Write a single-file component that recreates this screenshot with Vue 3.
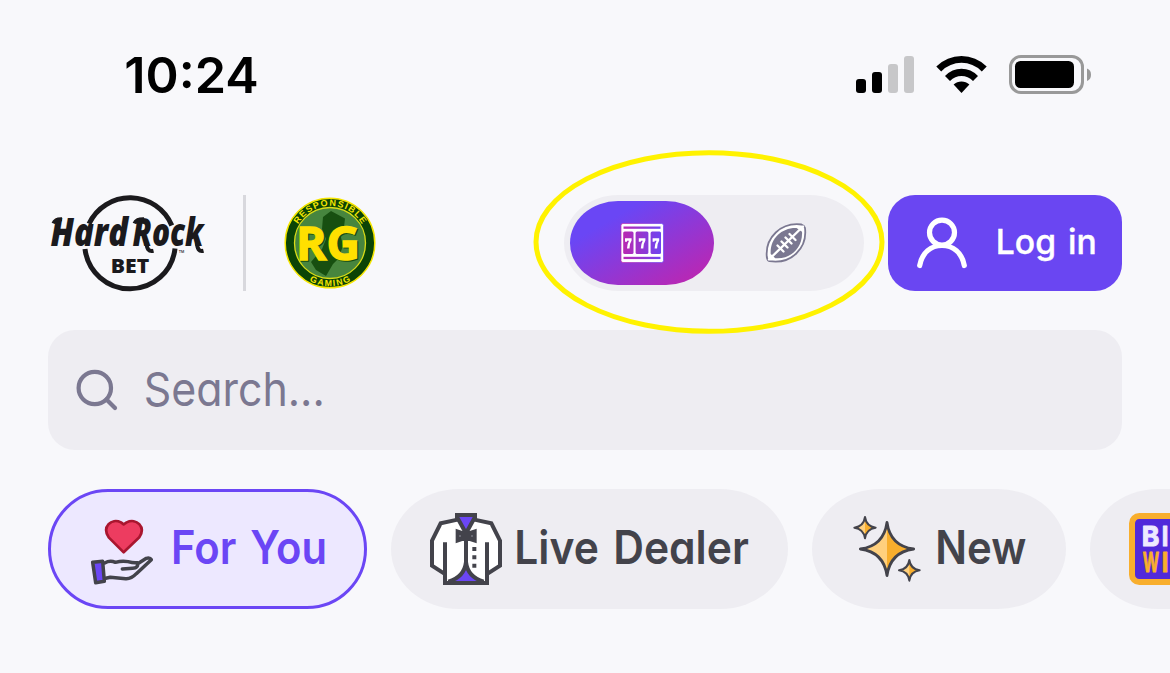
<script setup>
const star = (cx, cy, r) =>
  `M${cx} ${cy - r}Q${cx + r * 0.12} ${cy - r * 0.12} ${cx + r} ${cy}Q${cx + r * 0.12} ${cy + r * 0.12} ${cx} ${cy + r}Q${cx - r * 0.12} ${cy + r * 0.12} ${cx - r} ${cy}Q${cx - r * 0.12} ${cy - r * 0.12} ${cx} ${cy - r}Z`
const halfStar = (cx, cy, r) =>
  `M${cx} ${cy - r}Q${cx + r * 0.12} ${cy - r * 0.12} ${cx + r} ${cy}Q${cx + r * 0.12} ${cy + r * 0.12} ${cx} ${cy + r}Z`
const sparkles = [
  { cx: 246, cy: 207, r: 80, w: 8.5 },
  { cx: 180, cy: 143, r: 32, w: 6 },
  { cx: 313, cy: 271, r: 31, w: 6 },
]
</script>

<template>
  <div class="screen">
    <div class="status">
      <svg class="clock" width="140" height="50" viewBox="120 49 140 50">
        <text x="124.3" y="93" font-size="49.5" textLength="134.5" lengthAdjust="spacingAndGlyphs">10:24</text>
      </svg>
      <svg width="240" height="44" viewBox="854 52 240 44">
        <rect x="856" y="79" width="10" height="14" rx="3" />
        <rect x="872" y="72" width="10" height="21" rx="3" />
        <rect x="888" y="64" width="10" height="29" rx="3" fill="#c7c7c9" />
        <rect x="904" y="56" width="10" height="37" rx="3" fill="#c7c7c9" />
        <path d="M936.3 66.6Q947 56 961.5 56T986.7 66.6L981.8 71.4Q973 62.8 961.5 62.8T941.2 71.4Z" />
        <path d="M945 75.9Q952 68.7 961.5 68.7T978 75.9L973 81Q968 76 961.5 76T950 81Z" />
        <path d="M953.6 84.6Q957 81.4 961.5 81.4T969.4 84.6L961.5 93Z" />
        <rect x="1010.5" y="56.5" width="72" height="36" rx="10.5" fill="none" stroke="#999" stroke-width="3" />
        <rect x="1015" y="61" width="59" height="27" rx="5.5" />
        <path d="M1087 68.5Q1091 70 1091 74.8T1087 81Z" fill="#999" />
      </svg>
    </div>

    <header class="header">
      <svg width="160" height="96" viewBox="48 195 160 96">
        <path d="M89 223.800A45.300 45.300 0 0 1 171.800 225.500M175 248.500A45.300 45.300 0 0 1 85 249" fill="none" stroke="#1b1a1d" stroke-width="5" />
        <g class="brand">
          <text x="50.500" y="246" font-size="39.500" textLength="77.500" lengthAdjust="spacingAndGlyphs">Hard</text>
          <text x="132.500" y="246" font-size="39.500" textLength="71" lengthAdjust="spacingAndGlyphs">Rock</text>
        </g>
        <g fill="none" stroke="#1b1a1d" stroke-width="4">
          <path d="M53.500 223.500Q55 219 62 219.300M134.500 223.500Q136.500 219 144 219.300" />
          <path d="M146.500 242Q146.500 252.500 153.500 250.800M197 242Q197 252.500 203.500 250.800" />
        </g>
        <text class="bet" x="110.800" y="273" font-size="19.5" textLength="38.500" lengthAdjust="spacingAndGlyphs">BET</text>
        <text class="tm" x="178.800" y="252.500" font-size="4" textLength="5.500" lengthAdjust="spacingAndGlyphs">TM</text>
      </svg>
      <span class="rule"></span>
      <svg class="rg" width="92" height="96" viewBox="284 195 92 96">
        <defs>
          <path id="arc-top" d="M292.900 243A37.100 37.100 0 0 1 367.100 243" />
          <path id="arc-bottom" d="M286.800 243A43.200 43.200 0 0 0 373.200 243" />
        </defs>
        <circle cx="330" cy="243" r="44.800" fill="#0b4406" stroke="#f6e600" stroke-width="1.500" />
        <circle cx="330" cy="243" r="35.500" fill="#47853e" stroke="#d9dc18" stroke-width="1.300" />
        <path d="M323 217L331 211L345 218.500L344 227L340 233L343 246L338 259L333 264L326 276L316 270L311 262L322 249L326 239L322 229Z" fill="#174f10" />
        <text class="arc" font-size="9"><textPath href="#arc-top" startOffset="50%" text-anchor="middle" textLength="77">RESPONSIBLE</textPath></text>
        <text class="arc" font-size="8.800"><textPath href="#arc-bottom" startOffset="50%" text-anchor="middle" textLength="43">GAMING</textPath></text>
        <text class="rg-shadow" x="297.300" y="261.300" font-size="46.500" textLength="64" lengthAdjust="spacingAndGlyphs">RG</text>
        <text class="rg-text" x="296" y="260" font-size="46.500" textLength="64" lengthAdjust="spacingAndGlyphs">RG</text>
      </svg>

      <div class="toggle">
        <div class="side active">
          <svg width="44" height="40" viewBox="620 223 44 40">
            <defs>
              <linearGradient id="slot" x1="621" x2="663" y1="0" y2="0" gradientUnits="userSpaceOnUse">
                <stop stop-color="#bd27ad" /><stop offset="1" stop-color="#6a46f5" />
              </linearGradient>
            </defs>
            <rect x="621" y="223.500" width="42.500" height="39" rx="2" fill="#fff" stroke="url(#slot)" stroke-width=".7" />
            <g fill="url(#slot)">
              <rect x="623.500" y="226.500" width="37" height="2.300" />
              <rect x="623.500" y="256.800" width="37" height="2.300" />
              <rect x="623.200" y="231.600" width="10.300" height="22.500" rx="1.500" />
              <rect x="635.600" y="231.600" width="12.800" height="22.500" rx="1.500" />
              <rect x="650.600" y="231.600" width="10.400" height="22.500" rx="1.500" />
            </g>
            <g fill="#fff">
              <path d="M625 238.300H631.600V240.600Q629.600 243.500 629.500 248.500H627Q627 244 629 240.700H627V241.800H625Z" />
              <path d="M638.800 238.300H645.400V240.600Q643.400 243.500 643.300 248.500H640.800Q640.800 244 642.800 240.700H640.800V241.800H638.800Z" />
              <path d="M652.600 238.300H659.200V240.600Q657.200 243.500 657.100 248.500H654.600Q654.600 244 656.600 240.700H654.600V241.800H652.600Z" />
            </g>
          </svg>
        </div>
        <div class="side">
          <svg width="42" height="42" viewBox="765 222.500 42 42">
            <path d="M769.500 261.700Q767.300 261 766.800 257.500C765 238 781 222.500 801.500 225Q804.300 225.800 805 228.500C807.500 249 791 265 769.500 261.700Z" fill="#fff" stroke="#7b7891" stroke-width="1.800" />
            <path d="M770.700 254.500C769.500 240 781 228 796.500 228.500L802 232.300C803 248 791 260 775.300 258.700Z" fill="#7b7891" />
            <path d="M769 260L803 227M777.500 246L783.500 252M781.500 242L787.500 248M785.500 238L791.500 244M789.500 234.500L795.500 240.500" fill="none" stroke="#fff" stroke-width="2.300" stroke-linecap="round" />
          </svg>
        </div>
      </div>

      <button class="login">
        <svg width="200" height="60" viewBox="912 213 200 60">
          <g fill="none" stroke="#fff" stroke-width="5.200" stroke-linecap="round">
            <circle cx="942" cy="232.600" r="12.500" />
            <path d="M919.700 265.500C922 252.500 931 245.500 942 245.500S962 252.500 964.300 265.500" />
          </g>
          <text x="995.800" y="254.300" font-size="34.500" textLength="101" lengthAdjust="spacingAndGlyphs">Log in</text>
        </svg>
      </button>

      <svg class="highlight" width="352" height="184" viewBox="0 0 352 184">
        <ellipse cx="176" cy="92" rx="173" ry="89.300" />
      </svg>
    </header>

    <div class="search">
      <svg width="260" height="60" viewBox="72 360 260 60">
        <g fill="none" stroke="#7b7891" stroke-width="4.200" stroke-linecap="round">
          <circle cx="94.800" cy="388" r="16.200" />
          <path d="M106.500 399.500L115 408" />
        </g>
        <text x="143.800" y="406" font-size="46.500" textLength="181" lengthAdjust="spacingAndGlyphs">Search...</text>
      </svg>
    </div>

    <nav class="chips">
      <div class="chip selected">
        <svg width="64" height="72" viewBox="150 98 192 216">
          <path d="M251 216L206 171C185 139 214 112 243 126L251 132L260 126C289 112 319 139 298 171Z" fill="#ed3c60" stroke="#a9162f" stroke-width="8" stroke-linejoin="round" />
          <g fill="none" stroke="#43434b" stroke-width="10.500" stroke-linejoin="round" stroke-linecap="round">
            <path d="M158 246L188 243L193 303L167 307Z" fill="#6b46f5" />
            <path d="M194 248Q210 239 226 246Q247 240 264 244Q282 249 292 247Q296 264 278 264L247 266M292 251L319 234Q330 231 334 238L289 280Q274 296 257 295L211 291L197 294" />
          </g>
        </svg>
        <svg width="156" height="50" viewBox="171 524 156 50"><text x="171" y="564" font-size="46.500" textLength="156" lengthAdjust="spacingAndGlyphs">For You</text></svg>
      </div>

      <div class="chip dealer">
        <svg width="72" height="72" viewBox="135 99 216 216">
          <path d="M216 119L167 131L141 182V257L180 282V309H306V282L345 257V182L320 131L270 119L243 160Z" fill="#fff" />
          <path d="M243 250Q238 288 208 303H279Q248 288 243 250ZM218 107H268L243 158Z" fill="#6b46f5" />
          <g fill="none" stroke="#43434b" stroke-width="12">
            <path d="M218 119L167 130L141 182V257L178 281M268 119L319 130L345 182V257L308 281M180 187V309H306V187" />
            <path d="M216 120V105H270V120M216 111L243 160L270 111M243 168V246Q238 291 190 305M243 246Q248 291 296 305" />
          </g>
          <path d="M212 146L232 153H254L275 146V190L254 183H232L212 190Z" fill="#43434b" />
          <path d="M222 165H228V171H222ZM258 165H264V171H258Z" fill="#686872" />
          <path d="M262 201H274V213H262ZM262 226H274V238H262ZM262 251H274V263H262Z" fill="#43434b" />
        </svg>
        <svg width="236" height="50" viewBox="515 524 236 50"><text x="514.300" y="564" font-size="46.500" textLength="234.500" lengthAdjust="spacingAndGlyphs">Live Dealer</text></svg>
      </div>

      <div class="chip new">
        <svg width="70" height="72" viewBox="144 99 210 216">
          <g v-for="s in sparkles" :key="s.cx">
            <path :d="star(s.cx, s.cy, s.r)" fill="#ffd07d" />
            <path :d="halfStar(s.cx, s.cy, s.r)" fill="#f8ae2d" />
            <path :d="star(s.cx, s.cy, s.r)" fill="none" stroke="#43434b" :stroke-width="s.w" stroke-linejoin="round" />
          </g>
        </svg>
        <svg width="90" height="50" viewBox="936 524 90 50"><text x="935.300" y="564" font-size="46.500" textLength="91" lengthAdjust="spacingAndGlyphs">New</text></svg>
      </div>

      <div class="chip bingo">
        <svg width="72" height="72" viewBox="972 99 216 216">
          <rect x="981" y="108" width="198" height="198" rx="22" fill="#5129da" stroke="#f8ae2d" stroke-width="18" />
          <rect x="1023" y="146" width="30" height="46" fill="#6b46f5" />
          <g fill="#eeeaff" stroke="#eeeaff" stroke-width="3" stroke-linejoin="round" font-size="83">
            <text x="1010" y="198" textLength="53" lengthAdjust="spacingAndGlyphs">B</text>
            <text x="1070" y="198" textLength="20" lengthAdjust="spacingAndGlyphs">I</text>
          </g>
          <g fill="#f8ae2d" stroke="#f8ae2d" stroke-width="3" stroke-linejoin="round" font-size="83">
            <text x="1013" y="275" textLength="49" lengthAdjust="spacingAndGlyphs">W</text>
            <text x="1070" y="275" textLength="20" lengthAdjust="spacingAndGlyphs">I</text>
          </g>
        </svg>
      </div>
    </nav>
  </div>
</template>

<style>
body { margin: 0; overflow: hidden; background: #f8f8fb; }
</style>

<style scoped>
.screen {
  box-sizing: border-box;
  width: 1170px;
  height: 673px;
  overflow: hidden;
  background: #f8f8fb;
  font-family: Inter, "Open Sans", sans-serif;
  font-feature-settings: "cv11";
}
svg { display: block; flex: none; overflow: visible; }
.status {
  display: flex;
  justify-content: space-between;
  align-items: center;
  height: 148px;
  padding: 0 76px 0 120px;
  box-sizing: border-box;
}
.clock { font-weight: 600; font-feature-settings: normal; }
.header {
  position: relative;
  display: flex;
  align-items: center;
  height: 96px;
  margin: 47px 48px 0;
}
.brand {
  font-family: "Open Sans", sans-serif;
  font-weight: 800;
  font-style: italic;
  fill: #1b1a1d;
  font-feature-settings: normal;
}
.bet { font-family: "Open Sans", sans-serif; font-weight: 800; fill: #1b1a1d; }
.tm { font-weight: 500; fill: #1b1a1d; }
.rule { width: 3px; height: 96px; margin-left: 35px; background: #d8d8dd; }
.rg { margin-left: 38px; }
.arc { font-family: "Liberation Sans", sans-serif; font-weight: 700; fill: #f6e600; }
.rg-text, .rg-shadow { font-family: "Open Sans", sans-serif; font-weight: 700; fill: #ffe000; stroke: #ffe000; stroke-width: 1.4px; }
.rg-shadow { fill: #174f10; stroke: #174f10; }
.toggle {
  box-sizing: border-box;
  display: flex;
  width: 300px;
  height: 96px;
  margin-left: 188px;
  padding: 6px;
  border-radius: 54px / 48px;
  background: #eeedf2;
}
.side { flex: 1; display: flex; align-items: center; justify-content: center; }
.side.active { border-radius: 48px / 42px; background: linear-gradient(150deg, #6a46f5 25%, #b728b5 88%); }
.login {
  width: 234px;
  height: 96px;
  margin: 0 0 0 24px;
  padding: 0 0 0 24px;
  border: 0;
  border-radius: 27px;
  background: #6a46f2;
  font: 500 34px Inter, sans-serif;
}
.login text { fill: #fff; word-spacing: 3px; stroke: #fff; stroke-width: 0.4px; }
.highlight { position: absolute; left: 484.500px; top: -45px; pointer-events: none; }
.highlight ellipse { fill: none; stroke: #fff200; stroke-width: 5px; }
.search {
  display: flex;
  align-items: center;
  box-sizing: border-box;
  height: 120px;
  margin: 39px 48px 0;
  padding-left: 24px;
  border-radius: 27px;
  background: #eeedf2;
  fill: #7b7891;
}
.chips { display: flex; gap: 24px; margin: 39px 0 0 48px; }
.chip {
  box-sizing: border-box;
  display: flex;
  align-items: center;
  flex: none;
  height: 120px;
  border-radius: 68px / 60px;
  background: #eeedf2;
  fill: #43434b;
  font-weight: 600;
  word-spacing: 4px;
}
.selected {
  width: 319px;
  gap: 17px;
  padding-left: 39px;
  border: 3px solid #6b46f5;
  border-radius: 60px;
  background: #ede8ff;
  fill: #6b46f5;
}
.dealer { width: 397px; gap: 13px; padding-left: 39px; }
.new { width: 254px; gap: 13px; padding-left: 41px; }
.bingo { width: 240px; padding-left: 39px; font-weight: 700; }
</style>
